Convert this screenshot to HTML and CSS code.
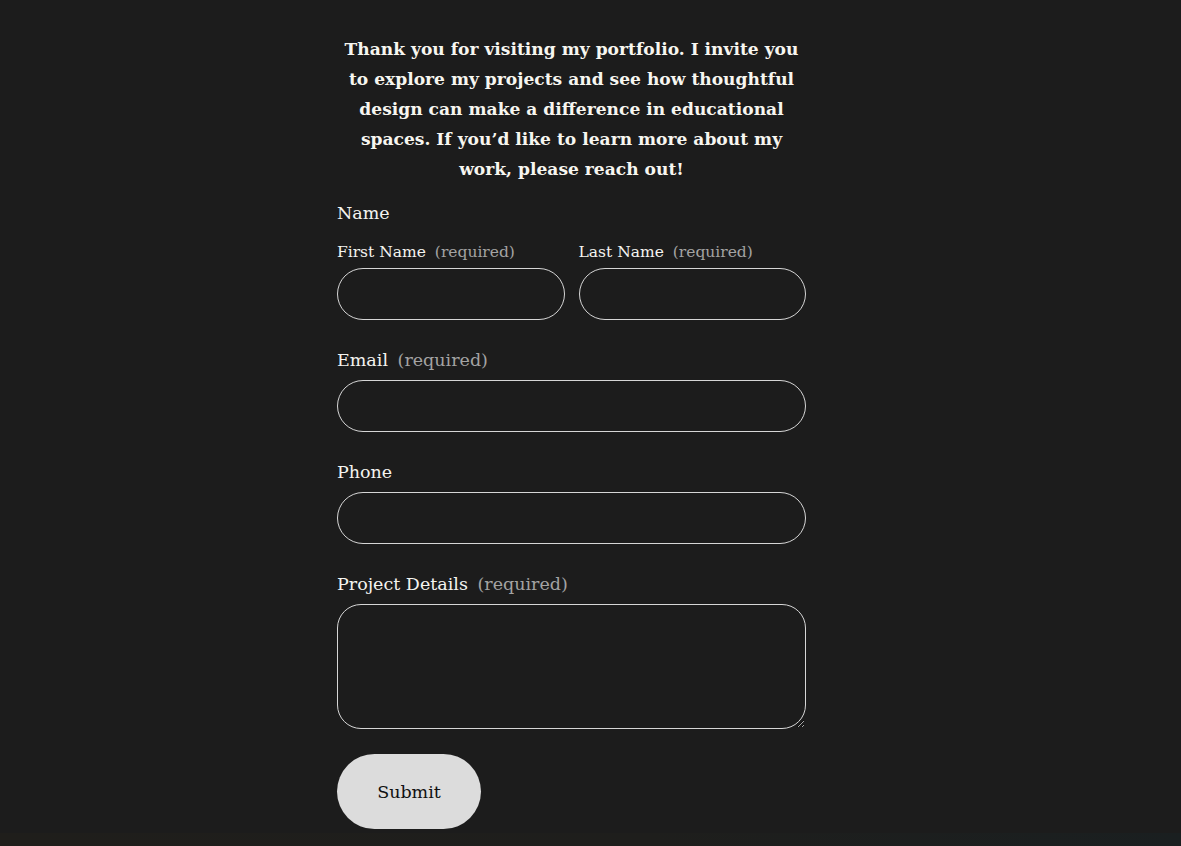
FILE: index.html
```html
<!DOCTYPE html>
<html lang="en">
<head>
<meta charset="utf-8">
<title>Contact</title>
<link rel="stylesheet" href="styles.css">
</head>
<body>
<main class="page">
  <section class="contact">
    <p class="intro">Thank you for visiting my portfolio. I invite you to explore my projects and see how thoughtful design can make a difference in educational spaces. If you’d like to learn more about my work, please reach out!</p>
    <form class="form" onsubmit="return false">
      <fieldset class="field name-field">
        <legend class="label">Name</legend>
        <div class="name-row">
          <label class="sub-field">
            <span class="sub-label">First Name <span class="req">(required)</span></span>
            <input class="input" type="text">
          </label>
          <label class="sub-field">
            <span class="sub-label">Last Name <span class="req">(required)</span></span>
            <input class="input" type="text">
          </label>
        </div>
      </fieldset>
      <label class="field">
        <span class="label">Email <span class="req">(required)</span></span>
        <input class="input" type="email">
      </label>
      <label class="field">
        <span class="label">Phone</span>
        <input class="input" type="tel">
      </label>
      <label class="field">
        <span class="label">Project Details <span class="req">(required)</span></span>
        <textarea class="textarea"></textarea>
      </label>
      <div class="actions">
        <button class="submit" type="submit">Submit</button>
      </div>
    </form>
  </section>
  <div class="footer-strip"></div>
</main>
</body>
</html>
```
FILE: styles.css
```css
* { box-sizing: border-box; }
html, body { margin: 0; padding: 0; }
body {
  background: #1c1c1c;
  color: #f4f4f0;
  font-family: "DejaVu Serif", "Liberation Serif", serif;
  height: 846px;
  overflow: hidden;
}
.page {
  display: flex;
  flex-direction: column;
  min-height: 846px;
}
.contact {
  width: 469px;
  margin-left: 337px;
  padding-top: 34px;
  flex: 1;
}
.intro {
  margin: 0;
  text-align: center;
  font-weight: 700;
  font-size: 17.1px;
  line-height: 30px;
  color: #f7f6f0;
  padding: 0 2px;
}
.form {
  margin-top: 17px;
  display: flex;
  flex-direction: column;
}
.field {
  display: flex;
  flex-direction: column;
  border: 0;
  margin: 0 0 28px 0;
  padding: 0;
  min-width: 0;
}
.label {
  padding: 0;
  font-size: 17.5px;
  line-height: 24px;
  margin-bottom: 8px;
  color: #f4f4f0;
}
.name-field .label { margin-bottom: 16px; }
.name-row {
  display: flex;
  gap: 14px;
}
.sub-field {
  flex: 1;
  display: flex;
  flex-direction: column;
}
.sub-label {
  font-size: 15.5px;
  line-height: 22px;
  margin-bottom: 5px;
}
.req {
  color: #a3a3a3;
  margin-left: 4px;
}
.input, .textarea {
  display: block;
  width: 100%;
  background: transparent;
  border: 1px solid #d6d6d6;
  color: #f4f4f0;
  font-family: inherit;
  font-size: 16px;
  padding: 0 20px;
  outline: none;
}
.input {
  height: 52px;
  border-radius: 26px;
}
.textarea {
  height: 125px;
  border-radius: 24px;
  resize: vertical;
  padding: 14px 20px;
}
.actions {
  margin-top: -3px;
}
.submit {
  width: 144px;
  height: 75px;
  border: 0;
  border-radius: 38px;
  background: #dcdcdc;
  color: #111;
  font-family: inherit;
  font-size: 17.5px;
  padding: 0;
  cursor: pointer;
}
.footer-strip {
  height: 13px;
  background: linear-gradient(90deg, #1f1e1b 0%, #1e1e1c 55%, #1a1f20 100%);
}
```
